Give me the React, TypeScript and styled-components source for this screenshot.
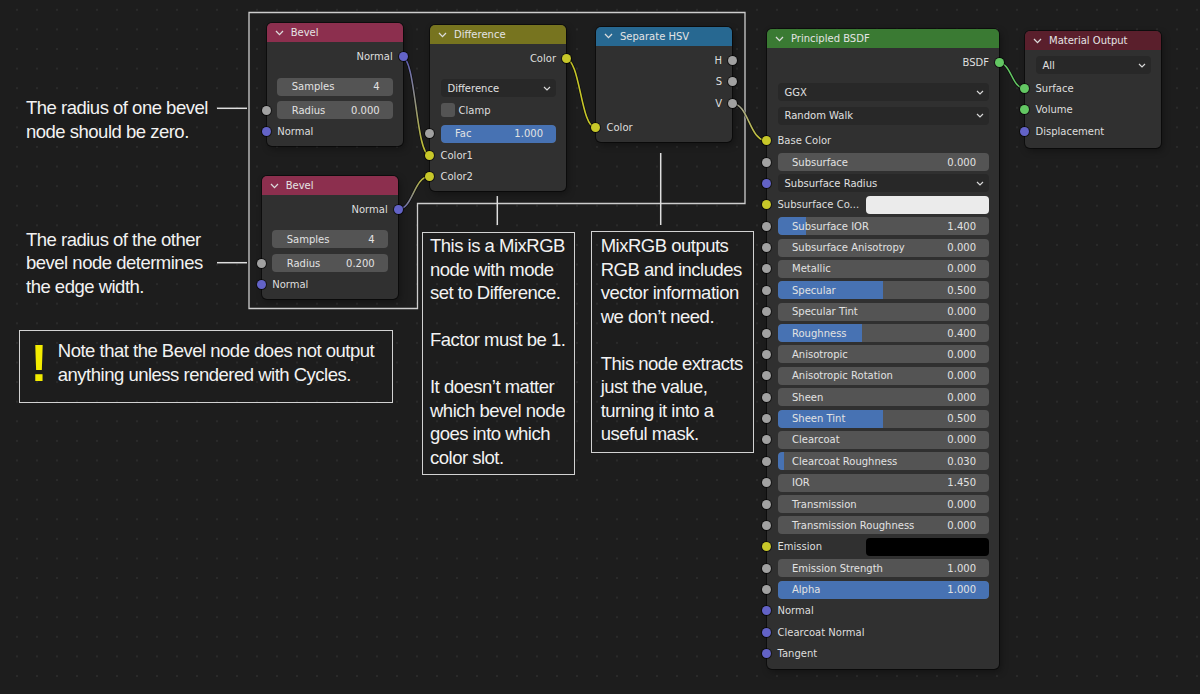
import React from 'react';
import styled, { createGlobalStyle } from 'styled-components';

const GlobalStyle = createGlobalStyle`
  html, body { margin: 0; padding: 0; background: #1d1d1d; }
  body { width: 1200px; height: 694px; overflow: hidden; }
  * { box-sizing: border-box; }
`;

const C = {
  vec: '#6363c7',
  col: '#c7c729',
  flt: '#a1a1a1',
  shd: '#63c763',
};

const Canvas = styled.div`
  position: relative;
  width: 1200px;
  height: 694px;
  overflow: hidden;
  background-color: #1d1d1d;
  background-image: radial-gradient(circle, #2a2a2a 0.9px, transparent 1.5px);
  background-size: 20px 19.6px;
  background-position: 7px 0;
  font-family: 'DejaVu Sans', 'Noto Sans', sans-serif;
`;

const Layer = styled.svg`
  position: absolute;
  left: 0;
  top: 0;
  width: 1200px;
  height: 694px;
  pointer-events: none;
`;

const NodeBox = styled.div<{ $x: number; $y: number; $w: number; $pb: number }>`
  position: absolute;
  left: ${(p) => p.$x}px;
  top: ${(p) => p.$y}px;
  width: ${(p) => p.$w}px;
  padding-bottom: ${(p) => p.$pb}px;
  display: flex;
  flex-direction: column;
  background: #303030;
  border-radius: 5px;
  box-shadow: 0 0 0 1px rgba(0, 0, 0, 0.5), 2px 3px 7px rgba(0, 0, 0, 0.35);
`;

const Header = styled.div<{ $c: string }>`
  height: 19px;
  display: flex;
  align-items: center;
  gap: 7px;
  padding-left: 8px;
  margin-bottom: 4px;
  background: ${(p) => p.$c};
  border-radius: 5px 5px 0 0;
  color: #e4e4e4;
  font-size: 10px;
  white-space: nowrap;
`;

const Row = styled.div<{ $h?: number; $right?: boolean }>`
  position: relative;
  height: ${(p) => p.$h ?? 21.4}px;
  display: flex;
  align-items: center;
  justify-content: ${(p) => (p.$right ? 'flex-end' : 'flex-start')};
  gap: 4px;
  padding: 0 10px 0 10.5px;
  color: #dedede;
  font-size: 10px;
  white-space: nowrap;
`;

const Spacer = styled.div<{ $h: number }>`
  height: ${(p) => p.$h}px;
  flex: none;
`;

const Socket = styled.span<{ $c: string; $out?: boolean }>`
  position: absolute;
  top: 50%;
  ${(p) => (p.$out ? 'right: -5px;' : 'left: -5px;')}
  width: 9px;
  height: 9px;
  margin-top: -4.5px;
  border-radius: 50%;
  background: ${(p) => p.$c};
  box-shadow: 0 0 0 1px rgba(0, 0, 0, 0.55);
`;

const NumField = styled.div`
  position: relative;
  flex: 1;
  height: 18px;
  display: flex;
  align-items: center;
  justify-content: space-between;
  padding: 0 13px 0 14.5px;
  background: #545454;
  border-radius: 4px;
  overflow: hidden;
  color: #e2e2e2;
`;

const Fill = styled.div`
  position: absolute;
  left: 0;
  top: 0;
  bottom: 0;
  background: #4772b3;
`;

const FieldText = styled.span`
  position: relative;
`;

const Dropdown = styled.div`
  flex: 1;
  height: 18px;
  display: flex;
  align-items: center;
  justify-content: space-between;
  padding: 0 5px 0 7px;
  background: #282828;
  border-radius: 4px;
  color: #e0e0e0;
`;

const Swatch = styled.div<{ $c: string }>`
  width: 123px;
  height: 18px;
  margin-left: auto;
  flex: none;
  background: ${(p) => p.$c};
  border-radius: 4px;
`;

const SwatchLabel = styled.span`
  flex: 1;
  overflow: hidden;
`;

const Check = styled.span`
  width: 14px;
  height: 14px;
  background: #545454;
  border-radius: 3px;
  flex: none;
`;

const Annot = styled.div<{ $x: number; $y: number }>`
  position: absolute;
  left: ${(p) => p.$x}px;
  top: ${(p) => p.$y}px;
  font-family: 'Liberation Sans', Arial, sans-serif;
  font-size: 18.5px;
  letter-spacing: -0.5px;
  line-height: 23.5px;
  color: #f2f2f2;
  white-space: pre;
`;

const BoxNote = styled(Annot)<{ $w: number; $h: number; $pl: number; $pt: number }>`
  width: ${(p) => p.$w}px;
  height: ${(p) => p.$h}px;
  padding: ${(p) => p.$pt}px 0 0 ${(p) => p.$pl}px;
  border: 1px solid #d2d2d2;
`;

const WarnBox = styled(Annot)`
  width: 374px;
  height: 73px;
  display: flex;
  align-items: flex-start;
  padding-top: 8.3px;
  border: 1px solid #d2d2d2;
  line-height: 24px;
`;

const Bang = styled.span`
  width: 37.5px;
  flex: none;
  text-align: center;
  margin-top: -1.2px;
  font-weight: 700;
  font-size: 51px;
  letter-spacing: 0;
  line-height: 51px;
  color: #f3ec00;
`;

const Chevron = () => (
  <svg width="9" height="6" viewBox="0 0 9 6">
    <polyline points="1,1 4.5,4.6 8,1" fill="none" stroke="#dcdcdc" strokeWidth="1.3" />
  </svg>
);

const SmallChevron = () => (
  <svg width="8" height="5" viewBox="0 0 8 5">
    <polyline points="1,1 4,4 7,1" fill="none" stroke="#d8d8d8" strokeWidth="1.2" />
  </svg>
);

const Num: React.FC<{ label: string; value: string; fill?: number }> = ({ label, value, fill }) => (
  <NumField>
    {fill ? (
      <Fill style={{ width: `${fill * 100}%`, borderRadius: fill >= 1 ? '4px' : '4px 0 0 4px' }} />
    ) : null}
    <FieldText>{label}</FieldText>
    <FieldText>{value}</FieldText>
  </NumField>
);

const Drop: React.FC<{ label: string }> = ({ label }) => (
  <Dropdown>
    <span>{label}</span>
    <SmallChevron />
  </Dropdown>
);

const BevelNode: React.FC<{ x: number; y: number; radius: string }> = ({ x, y, radius }) => (
  <NodeBox $x={x} $y={y} $w={136} $pb={4}>
    <Header $c="#8c2f4e">
      <Chevron />
      Bevel
    </Header>
    <Row $right>
      Normal
      <Socket $c={C.vec} $out />
    </Row>
    <Spacer $h={8} />
    <Row $h={22}>
      <Num label="Samples" value="4" />
    </Row>
    <Spacer $h={2} />
    <Row>
      <Socket $c={C.flt} />
      <Num label="Radius" value={radius} />
    </Row>
    <Row>
      <Socket $c={C.vec} />
      Normal
    </Row>
  </NodeBox>
);

const DifferenceNode = () => (
  <NodeBox $x={430} $y={25} $w={136} $pb={4}>
    <Header $c="#77741f">
      <Chevron />
      Difference
    </Header>
    <Row $right>
      Color
      <Socket $c={C.col} $out />
    </Row>
    <Spacer $h={8} />
    <Row $h={22}>
      <Drop label="Difference" />
    </Row>
    <Row $h={22}>
      <Check />
      Clamp
    </Row>
    <Spacer $h={1.6} />
    <Row>
      <Socket $c={C.flt} />
      <Num label="Fac" value="1.000" fill={1} />
    </Row>
    <Row>
      <Socket $c={C.col} />
      Color1
    </Row>
    <Row>
      <Socket $c={C.col} />
      Color2
    </Row>
  </NodeBox>
);

const HsvNode = () => (
  <NodeBox $x={596} $y={26.7} $w={136} $pb={4}>
    <Header $c="#276891">
      <Chevron />
      Separate HSV
    </Header>
    {['H', 'S', 'V'].map((s) => (
      <Row key={s} $right>
        {s}
        <Socket $c={C.flt} $out />
      </Row>
    ))}
    <Spacer $h={3} />
    <Row>
      <Socket $c={C.col} />
      Color
    </Row>
  </NodeBox>
);

type PRow =
  | { k: 'sock'; label: string; c: string }
  | { k: 'num'; label: string; value: string; fill?: number }
  | { k: 'drop'; label: string; c: string }
  | { k: 'swatch'; label: string; swatch: string };

const principledRows: PRow[] = [
  { k: 'sock', label: 'Base Color', c: C.col },
  { k: 'num', label: 'Subsurface', value: '0.000' },
  { k: 'drop', label: 'Subsurface Radius', c: C.vec },
  { k: 'swatch', label: 'Subsurface Co...', swatch: '#ebebeb' },
  { k: 'num', label: 'Subsurface IOR', value: '1.400', fill: 0.133 },
  { k: 'num', label: 'Subsurface Anisotropy', value: '0.000' },
  { k: 'num', label: 'Metallic', value: '0.000' },
  { k: 'num', label: 'Specular', value: '0.500', fill: 0.5 },
  { k: 'num', label: 'Specular Tint', value: '0.000' },
  { k: 'num', label: 'Roughness', value: '0.400', fill: 0.4 },
  { k: 'num', label: 'Anisotropic', value: '0.000' },
  { k: 'num', label: 'Anisotropic Rotation', value: '0.000' },
  { k: 'num', label: 'Sheen', value: '0.000' },
  { k: 'num', label: 'Sheen Tint', value: '0.500', fill: 0.5 },
  { k: 'num', label: 'Clearcoat', value: '0.000' },
  { k: 'num', label: 'Clearcoat Roughness', value: '0.030', fill: 0.03 },
  { k: 'num', label: 'IOR', value: '1.450' },
  { k: 'num', label: 'Transmission', value: '0.000' },
  { k: 'num', label: 'Transmission Roughness', value: '0.000' },
  { k: 'swatch', label: 'Emission', swatch: '#000000' },
  { k: 'num', label: 'Emission Strength', value: '1.000' },
  { k: 'num', label: 'Alpha', value: '1.000', fill: 1 },
  { k: 'sock', label: 'Normal', c: C.vec },
  { k: 'sock', label: 'Clearcoat Normal', c: C.vec },
  { k: 'sock', label: 'Tangent', c: C.vec },
];

const PrincipledNode = () => (
  <NodeBox $x={767} $y={29} $w={232} $pb={4.5}>
    <Header $c="#3a7a33">
      <Chevron />
      Principled BSDF
    </Header>
    <Row $right>
      BSDF
      <Socket $c={C.shd} $out />
    </Row>
    <Spacer $h={7.1} />
    <Row $h={23.4}>
      <Drop label="GGX" />
    </Row>
    <Row $h={23.4}>
      <Drop label="Random Walk" />
    </Row>
    <Spacer $h={2.7} />
    {principledRows.map((r) => {
      if (r.k === 'sock')
        return (
          <Row key={r.label} $h={21.39}>
            <Socket $c={r.c} />
            {r.label}
          </Row>
        );
      if (r.k === 'num')
        return (
          <Row key={r.label} $h={21.39}>
            <Socket $c={C.flt} />
            <Num label={r.label} value={r.value} fill={r.fill} />
          </Row>
        );
      if (r.k === 'drop')
        return (
          <Row key={r.label} $h={21.39}>
            <Socket $c={r.c} />
            <Drop label={r.label} />
          </Row>
        );
      return (
        <Row key={r.label} $h={21.39}>
          <Socket $c={C.col} />
          <SwatchLabel>{r.label}</SwatchLabel>
          <Swatch $c={r.swatch} />
        </Row>
      );
    })}
  </NodeBox>
);

const OutputNode = () => (
  <NodeBox $x={1025} $y={31} $w={136} $pb={6}>
    <Header $c="#5a1f2c">
      <Chevron />
      Material Output
    </Header>
    <Row $h={22}>
      <Drop label="All" />
    </Row>
    <Spacer $h={1.6} />
    <Row>
      <Socket $c={C.shd} />
      Surface
    </Row>
    <Row>
      <Socket $c={C.shd} />
      Volume
    </Row>
    <Row>
      <Socket $c={C.vec} />
      Displacement
    </Row>
  </NodeBox>
);

type Wire = { id: string; x1: number; y1: number; x2: number; y2: number; c1: string; c2: string };
const wires: Wire[] = [
  { id: 'w1', x1: 402.2, y1: 57, x2: 429.5, y2: 155.1, c1: C.vec, c2: C.col },
  { id: 'w2', x1: 397.2, y1: 209.7, x2: 429.5, y2: 176.5, c1: C.vec, c2: C.col },
  { id: 'w3', x1: 565.5, y1: 58.7, x2: 595.5, y2: 127.6, c1: C.col, c2: C.col },
  { id: 'w4', x1: 731.5, y1: 103.2, x2: 766.5, y2: 140.7, c1: C.flt, c2: C.col },
  { id: 'w5', x1: 998.5, y1: 62.7, x2: 1024.5, y2: 88.3, c1: C.shd, c2: C.shd },
];

const wirePath = (w: Wire) => {
  const d = Math.abs(w.x2 - w.x1) * 0.5;
  return `M${w.x1},${w.y1} C${w.x1 + d},${w.y1} ${w.x2 - d},${w.y2} ${w.x2},${w.y2}`;
};

export default function App() {
  return (
    <>
      <GlobalStyle />
      <Canvas>
        <Layer viewBox="0 0 1200 694">
          <path
            d="M249,12.5 H745 V203.5 H417.5 V308.5 H249 Z"
            fill="none"
            stroke="#cdcdcd"
            strokeWidth="1.3"
          />
          <g stroke="#dedede" strokeWidth="1.5">
            <line x1="217" y1="108.3" x2="247" y2="108.3" />
            <line x1="217" y1="262.7" x2="247" y2="262.7" />
            <line x1="497.3" y1="196" x2="497.3" y2="225" />
            <line x1="660.7" y1="153" x2="660.7" y2="225" />
          </g>
          <defs>
            {wires.map((w) => (
              <linearGradient
                key={w.id}
                id={w.id}
                gradientUnits="userSpaceOnUse"
                x1={w.x1}
                y1={w.y1}
                x2={w.x2}
                y2={w.y2}
              >
                <stop offset="0" stopColor={w.c1} />
                <stop offset="1" stopColor={w.c2} />
              </linearGradient>
            ))}
          </defs>
          {wires.map((w) => (
            <g key={w.id} fill="none">
              <path d={wirePath(w)} stroke="rgba(0,0,0,0.55)" strokeWidth="3" />
              <path d={wirePath(w)} stroke={`url(#${w.id})`} strokeWidth="1.6" />
            </g>
          ))}
        </Layer>

        <BevelNode x={266.7} y={23.3} radius="0.000" />
        <BevelNode x={261.7} y={176} radius="0.200" />
        <DifferenceNode />
        <HsvNode />
        <PrincipledNode />
        <OutputNode />

        <Annot $x={26} $y={96}>
          {'The radius of one bevel\nnode should be zero.'}
        </Annot>
        <Annot $x={26} $y={227.7}>
          {'The radius of the other\nbevel node determines\nthe edge width.'}
        </Annot>
        <WarnBox $x={19.3} $y={330}>
          <Bang>!</Bang>
          <span>{'Note that the Bevel node does not output\nanything unless rendered with Cycles.'}</span>
        </WarnBox>
        <BoxNote $x={422.3} $y={231.7} $w={153} $h={243} $pl={6.7} $pt={1.7}>
          {
            'This is a MixRGB\nnode with mode\nset to Difference.\n\nFactor must be 1.\n\nIt doesn\u2019t matter\nwhich bevel node\ngoes into which\ncolor slot.'
          }
        </BoxNote>
        <BoxNote $x={590.7} $y={230.7} $w={163} $h={222} $pl={9} $pt={2.7}>
          {
            'MixRGB outputs\nRGB and includes\nvector information\nwe don\u2019t need.\n\nThis node extracts\njust the value,\nturning it into a\nuseful mask.'
          }
        </BoxNote>
      </Canvas>
    </>
  );
}
